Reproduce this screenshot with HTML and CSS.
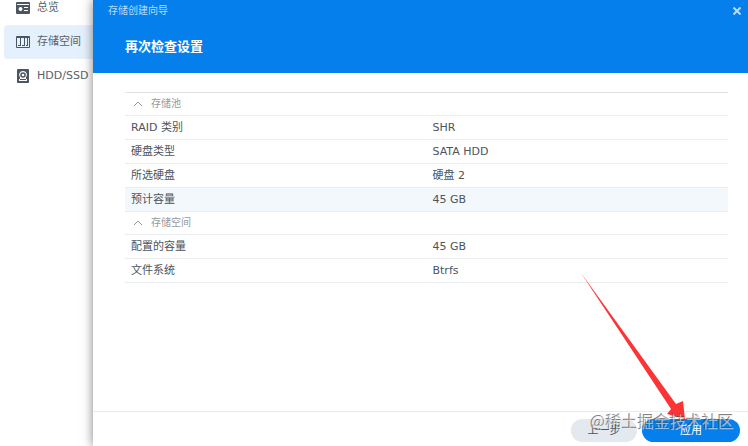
FILE: index.html
```html
<!DOCTYPE html>
<html lang="zh-CN">
<head>
    <meta charset="UTF-8">
    <meta name="viewport" content="width=device-width, initial-scale=1.0">
    <title>存储创建向导</title>
    <link rel="stylesheet" href="styles.css">
</head>
<body>
    <nav class="sidebar">
        <a class="nav-item" href="#overview">
            <svg class="nav-icon" viewBox="0 0 14 14">
                <path fill="#4b5661" fill-rule="evenodd" d="M1 1h12a1 1 0 0 1 1 1v10a1 1 0 0 1-1 1H1a1 1 0 0 1-1-1V2a1 1 0 0 1 1-1zM1 3v1h12V3zM4.500 6a2 2 0 1 0 0 4a2 2 0 0 0 0-4zM8 6v1h4V6zM8 9v1h4V9z"/>
            </svg>
            <span>总览</span>
        </a>
        <a class="nav-item active" href="#storage">
            <svg class="nav-icon" viewBox="0 0 14 14">
                <path fill="#4b5661" fill-rule="evenodd" d="M1 1h12a1 1 0 0 1 1 1v10a1 1 0 0 1-1 1H1a1 1 0 0 1-1-1V2a1 1 0 0 1 1-1zM1 3v9h12V3z"/>
                <path fill="#4b5661" d="M4 3h1v8H4zM8 3h1v8H8zM11 3h1v8h-1zM2 10h3v1H2zM6 10h3v1H6zM10 10h2v1h-2z"/>
            </svg>
            <span>存储空间</span>
        </a>
        <a class="nav-item" href="#hdd">
            <svg class="nav-icon" viewBox="0 0 14 14">
                <path fill="#4b5661" fill-rule="evenodd" d="M2 0h10a1 1 0 0 1 1 1v12a1 1 0 0 1-1 1H2a1 1 0 0 1-1-1V1a1 1 0 0 1 1-1zM7 2a4 4 0 0 0-3 6.600V10H3v2h8v-2h-1V8.600A4 4 0 0 0 7 2z"/>
                <circle cx="7" cy="6" r="2.800" fill="#4b5661"/>
                <circle cx="7" cy="6" r="1.300" fill="#fff"/>
                <path fill="#4b5661" d="M4 10h6v1H4z"/>
            </svg>
            <span>HDD/SSD</span>
        </a>
    </nav>

    <main class="wizard">
        <header class="wizard-header">
            <div class="title-bar">
                <span>存储创建向导</span>
                <button class="close" type="button" aria-label="关闭">
                    <svg viewBox="0 0 8 8"><path d="M0.500 0.500l7 7M7.500 0.500l-7 7" stroke="#b9dcfb" stroke-width="2"/></svg>
                </button>
            </div>
            <h1>再次检查设置</h1>
        </header>

        <div class="wizard-body">
            <table class="summary">
                <tbody>
                    <tr class="group">
                        <th colspan="2"><svg class="chevron" viewBox="0 0 10 6"><path d="M1 5l4-4 4 4"/></svg>存储池</th>
                    </tr>
                    <tr><td>RAID 类别</td><td>SHR</td></tr>
                    <tr><td>硬盘类型</td><td>SATA HDD</td></tr>
                    <tr><td>所选硬盘</td><td>硬盘 2</td></tr>
                    <tr class="highlight"><td>预计容量</td><td>45 GB</td></tr>
                </tbody>
                <tbody>
                    <tr class="group">
                        <th colspan="2"><svg class="chevron" viewBox="0 0 10 6"><path d="M1 5l4-4 4 4"/></svg>存储空间</th>
                    </tr>
                    <tr><td>配置的容量</td><td>45 GB</td></tr>
                    <tr><td>文件系统</td><td>Btrfs</td></tr>
                </tbody>
            </table>
        </div>

        <footer class="wizard-footer">
            <button class="btn" type="button">上一步</button>
            <button class="btn btn-primary" type="button">应用</button>
        </footer>

        <svg class="arrow" viewBox="0 0 104 146">
            <path fill="#fb3536" d="M0 0L95 131L102 128L104 146L86 141L90 136z"/>
        </svg>
        <span class="watermark">@稀土掘金技术社区</span>
    </main>
</body>
</html>
```

FILE: styles.css
```css
* {
    box-sizing: border-box;
}
body {
    margin: 0;
    display: flex;
    height: 100vh;
    overflow: hidden;
    background: #fff;
    color: #4c545c;
    font-family: "DejaVu Sans", "Noto Sans CJK SC", sans-serif;
    font-size: 11px;
    line-height: 16px;
}
button {
    border: none;
    padding: 0;
    font: inherit;
    cursor: pointer;
}

/* Sidebar, scrolled a little past its first item */
.sidebar {
    flex: 0 0 93px;
    margin-top: -9px;
    padding-left: 4px;
}
.nav-item {
    display: flex;
    align-items: center;
    gap: 7px;
    height: 34px;
    padding-left: 12px;
    border-radius: 4px 0 0 4px;
    color: #5a626a;
    text-decoration: none;
    white-space: nowrap;
}
.nav-item.active {
    background: #e4f0fc;
}
.nav-icon {
    width: 14px;
    height: 14px;
    flex: none;
}

/* Wizard window */
.wizard {
    position: relative;
    flex: 1;
    min-width: 0;
    display: flex;
    flex-direction: column;
    background: #fff;
    box-shadow: 0 0 10px rgba(0, 0, 0, 0.5);
}
.wizard-header {
    height: 73px;
    background: #057feb;
    color: #fff;
}
.title-bar {
    display: flex;
    justify-content: space-between;
    align-items: center;
    height: 22px;
    padding: 0 7px 0 15px;
    color: #b9dcfb;
    font-size: 10px;
}
.close {
    display: flex;
    background: none;
}
.close svg {
    width: 8px;
    height: 8px;
}
h1 {
    margin: 15px 0 0 32px;
    font-size: 13px;
    line-height: 20px;
    font-weight: bold;
}
.wizard-body {
    flex: 1;
    padding: 19px 20px 0 32px;
}
.summary {
    width: 100%;
    table-layout: fixed;
    border-spacing: 0;
    border-top: 1px solid #dfe2e4;
}
.summary td,
.summary th {
    height: 24px;
    padding: 0 6px;
    border-bottom: 1px solid #eaedef;
    text-align: left;
}
.summary .group th {
    height: 23px;
    padding-left: 8px;
    color: #93989d;
    font-size: 10px;
    font-weight: normal;
}
.summary .highlight td {
    background: #f3f8fd;
}
.chevron {
    width: 10px;
    height: 6px;
    margin-right: 8px;
    fill: none;
    stroke: #93989d;
}

.wizard-footer {
    display: flex;
    justify-content: flex-end;
    gap: 5px;
    padding: 7px 8px 4px;
    border-top: 1px solid #e8ebed;
}
.btn {
    width: 66px;
    height: 23px;
    border-radius: 12px;
    background: #e3e9ee;
    color: #4c545c;
}
.btn-primary {
    width: 98px;
    background: #057feb;
    color: #fff;
}

/* Marks laid over the window */
.arrow {
    position: absolute;
    right: 63px;
    bottom: 27px;
    width: 104px;
    height: 146px;
    pointer-events: none;
}
.watermark {
    position: absolute;
    right: 14px;
    bottom: 15px;
    color: rgba(235, 238, 240, 0.6);
    font-family: "Noto Sans CJK SC", sans-serif;
    font-size: 16px;
    line-height: 20px;
    text-shadow: -1px -1px 0 rgba(70, 75, 80, 0.7);
    pointer-events: none;
}
```
